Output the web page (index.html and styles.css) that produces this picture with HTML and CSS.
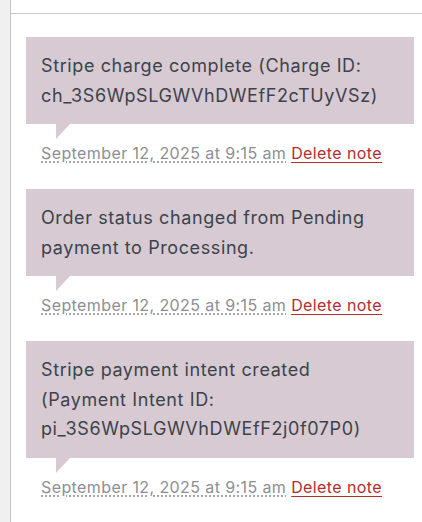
FILE: index.html
```html
<!DOCTYPE html>
<html lang="en">
<head>
<meta charset="utf-8">
<title>Order notes</title>
<link rel="stylesheet" href="styles.css">
</head>
<body>
<div class="page">
  <div class="gutter"></div>
  <div class="panel">
    <div class="panel-top"></div>
    <ul class="notes">
      <li class="note">
        <div class="note-content">Stripe charge complete (Charge ID: ch_3S6WpSLGWVhDWEfF2cTUyVSz)</div>
        <p class="meta"><abbr class="exact-date" title="2025-09-12 09:15:00">September 12, 2025 at 9:15 am</abbr> <a href="#" class="delete-note">Delete note</a></p>
      </li>
      <li class="note">
        <div class="note-content">Order status changed from Pending payment to Processing.</div>
        <p class="meta"><abbr class="exact-date" title="2025-09-12 09:15:00">September 12, 2025 at 9:15 am</abbr> <a href="#" class="delete-note">Delete note</a></p>
      </li>
      <li class="note">
        <div class="note-content">Stripe payment intent created (Payment Intent ID: pi_3S6WpSLGWVhDWEfF2j0f07P0)</div>
        <p class="meta"><abbr class="exact-date" title="2025-09-12 09:15:00">September 12, 2025 at 9:15 am</abbr> <a href="#" class="delete-note">Delete note</a></p>
      </li>
    </ul>
  </div>
</div>
</body>
</html>
```

FILE: styles.css
```css
html, body {
  margin: 0;
  padding: 0;
  background: #fff;
}
body {
  font-family: Inter, "Liberation Sans", sans-serif;
  color: #3c434a;
}
.page {
  display: flex;
  min-height: 522px;
}
.gutter {
  width: 10px;
  flex: none;
  background: #f0f0f0;
  border-right: 1px solid #c3c4c7;
}
.panel {
  flex: 1;
  min-width: 0;
}
.panel-top {
  height: 13px;
  border-bottom: 1px solid #c8c8c8;
}
.notes {
  list-style: none;
  margin: 0;
  padding: 23px 8px 0 15px;
}
.note {
  margin: 0 0 26px;
}
.note-content {
  position: relative;
  background: #d7cad2;
  padding: 14px 15px;
  font-size: 18px;
  letter-spacing: 0.6px;
  line-height: 29.5px;
  color: #3c434a;
}
.note-content::after {
  content: "";
  position: absolute;
  left: 30px;
  bottom: -15px;
  width: 0;
  height: 0;
  border-style: solid;
  border-width: 15px 14px 0 0;
  border-color: #d7cad2 transparent;
}
.meta {
  margin: 19px 0 0;
  padding: 0 15px;
  font-size: 16px;
  letter-spacing: 0.4px;
  line-height: 20px;
  color: #8c8f94;
}
.exact-date {
  text-decoration: underline dotted;
  text-underline-offset: 3px;
  color: #8c8f94;
}
.delete-note {
  color: #b32d2e;
  text-decoration: underline;
  text-underline-offset: 3px;
}
```
